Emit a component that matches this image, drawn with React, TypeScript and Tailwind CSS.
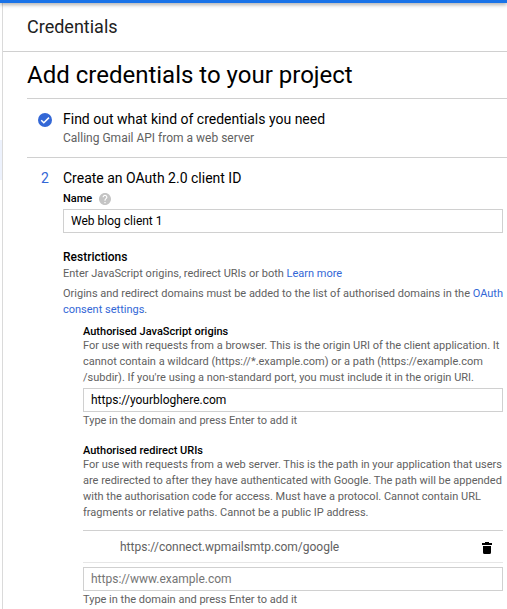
import type { ReactNode } from "react";

const ROBOTO = "font-['Roboto','Noto_Sans',sans-serif]";

function Para({ children }: { children: ReactNode }) {
  return <p className="text-[11px] leading-4 text-[#616161]">{children}</p>;
}

function Hint({ id }: { id: string }) {
  return (
    <p id={id} className="pt-px text-[11px] leading-4 text-[#616161]">
      Type in the domain and press Enter to add it
    </p>
  );
}

function TextField(props: { id: string; value?: string; placeholder?: string; hint?: string }) {
  return (
    <input
      id={props.id}
      type="text"
      defaultValue={props.value}
      placeholder={props.placeholder}
      aria-describedby={props.hint}
      className="block h-6 w-full border border-[#d0d0d0] bg-white px-[7px] text-[12px] text-black outline-none placeholder:text-[#757575]"
    />
  );
}

function DoneIcon() {
  return (
    <svg viewBox="0 0 14 14" className="size-3.5" aria-hidden="true">
      <circle cx="7" cy="7" r="7" fill="#3367d6" />
      <path d="M3.2 7.2 5.8 9.8 11 4.6" fill="none" stroke="#fff" strokeWidth="1.5" />
    </svg>
  );
}

function HelpIcon() {
  return (
    <svg viewBox="2 2 20 20" className="size-3" fill="#c4c4c4" aria-hidden="true">
      <path d="M12 2C6.48 2 2 6.48 2 12s4.48 10 10 10 10-4.48 10-10S17.52 2 12 2zm1 17h-2v-2h2v2zm2.07-7.75-.9.92C13.45 12.9 13 13.5 13 15h-2v-.5c0-1.1.45-2.1 1.17-2.83l1.24-1.26c.37-.36.59-.86.59-1.41 0-1.1-.9-2-2-2s-2 .9-2 2H8c0-2.21 1.79-4 4-4s4 1.79 4 4c0 .88-.36 1.68-.93 2.25z" />
    </svg>
  );
}

function TrashIcon() {
  return (
    <svg viewBox="0 0 10 12" className="h-3 w-2.5" aria-hidden="true">
      <path d="M3 0h4v1h3v2H0V1h3zM1 4h8v6.5Q9 12 7.5 12h-5Q1 12 1 10.5z" fill="#000" />
    </svg>
  );
}

export default function App() {
  return (
    <div className={`${ROBOTO} flex min-h-screen flex-col bg-white text-black`}>
      <div className="relative h-[3px] bg-[#1a73e8] shadow-[0_1px_4px_rgba(0,0,0,0.5)]" />
      <div className="flex grow">
        <div className="w-[3px] shrink-0 border-r border-[#dadada] pt-[137px]">
          <div className="h-10 bg-[#edf2fd]" />
        </div>
        <div className="min-w-0 grow">
          <header className="flex h-[49px] items-center border-b border-[#d0d0d0] pl-6">
            <h1 className="text-[18px] leading-6 text-[#212121]">Credentials</h1>
          </header>
          <main className="pl-6">
            <h2 className="flex h-[47px] items-center border-b border-[#d0d0d0] text-[24px] leading-8">
              Add credentials to your project
            </h2>

            <section className="flex border-b border-[#d0d0d0] pt-2.5 pb-[11px]">
              <div className="flex h-[22px] w-9 shrink-0 items-center justify-center">
                <DoneIcon />
              </div>
              <div className="min-w-0 grow">
                <h3 className="text-[14px] leading-5">Find out what kind of credentials you need</h3>
                <p className="pt-px text-[12px] leading-4 text-[#616161]">Calling Gmail API from a web server</p>
              </div>
            </section>

            <section className="flex pt-2.5 pr-1">
              <div className="w-9 shrink-0 text-center text-[14px] leading-5 text-[#3367d6]">2</div>
              <div className="min-w-0 grow">
                <h3 className="text-[14px] leading-5">Create an OAuth 2.0 client ID</h3>
                <div className="flex items-center gap-[7px] pt-[3px] pb-0.5">
                  <label htmlFor="name" className="text-[11px] leading-4 font-medium">
                    Name
                  </label>
                  <button type="button" aria-label="Help">
                    <HelpIcon />
                  </button>
                </div>
                <TextField id="name" value="Web blog client 1" />

                <h4 className="pt-4 pb-px text-[12px] leading-4 font-medium">Restrictions</h4>
                <div className="-mr-1 space-y-1">
                  <Para>
                    Enter JavaScript origins, redirect URIs or both{" "}
                    <a href="#learn" className="text-[#3367d6]">
                      Learn more
                    </a>
                  </Para>
                  <Para>
                    Origins and redirect domains must be added to the list of authorised domains in the{" "}
                    <a href="#consent" className="text-[#3367d6]">
                      OAuth consent settings
                    </a>
                    .
                  </Para>
                </div>

                <div className="pl-5">
                  <label htmlFor="origins" className="block pt-[7px] text-[11px] leading-[13px] font-medium">
                    Authorised JavaScript origins
                  </label>
                  <Para>
                    For use with requests from a browser. This is the origin URI of the client application. It cannot
                    contain a wildcard (https://*.example.com) or a path (https://example.com
                    <wbr />
                    /subdir). If you're using a non-standard port, you must include it in the origin URI.
                  </Para>
                  <div className="pt-0.5">
                    <TextField id="origins" value="https://yourbloghere.com" hint="origins-hint" />
                  </div>
                  <Hint id="origins-hint" />

                  <label htmlFor="redirects" className="block pt-[15px] text-[11px] leading-[13px] font-medium">
                    Authorised redirect URIs
                  </label>
                  <Para>
                    For use with requests from a web server. This is the path in your application that users are
                    redirected to after they have authenticated with Google. The path will be appended with the
                    authorisation code for access. Must have a protocol. Cannot contain URL fragments or relative paths.
                    Cannot be a public IP address.
                  </Para>
                  <ul className="mt-[9px] mb-1 border-y border-t-[#d0d0d0] border-b-[#e6e6e6]">
                    <li className="flex h-[31px] items-center justify-between pr-[11px] pl-[37px] text-[12px] text-[#616161]">
                      <span>https://connect.wpmailsmtp.com/google</span>
                      <button type="button" aria-label="Delete" className="pt-[3px]">
                        <TrashIcon />
                      </button>
                    </li>
                  </ul>
                  <TextField id="redirects" placeholder="https://www.example.com" hint="redirects-hint" />
                  <Hint id="redirects-hint" />
                </div>
              </div>
            </section>
          </main>
        </div>
      </div>
    </div>
  );
}
